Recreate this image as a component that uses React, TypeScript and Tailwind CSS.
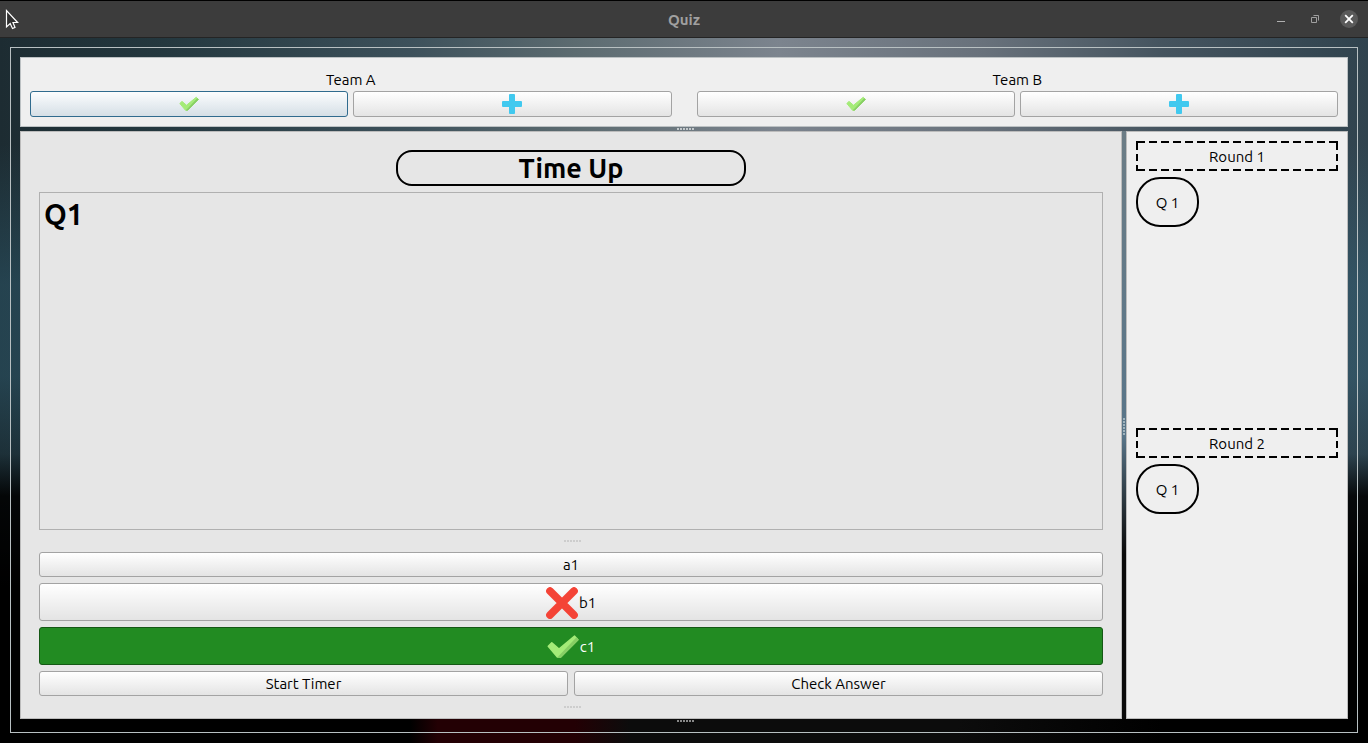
import React from "react";

function Check({ className }: { className: string }) {
  return (
    <svg viewBox="0 0 32 32" className={className} strokeLinejoin="round" aria-hidden="true">
      <path
        d="M1.3 15.2 L4.8 11.8 L12 18 L27.6 5.2 L30.8 8.7 L13.6 26 L10.4 26 Z"
        fill="#a4eb78"
        stroke="#a4eb78"
        strokeWidth="1.6"
      />
      <path d="M12 25.9 L29.6 7.4 L30.8 8.7 L13.6 26 Z" fill="#87ce64" stroke="#87ce64" strokeWidth="1.6" />
    </svg>
  );
}

function Plus({ className }: { className: string }) {
  return (
    <svg viewBox="0 0 20 20" className={className} aria-hidden="true">
      <rect x="7" y="0" width="6" height="20" rx="1" fill="#41c9ef" />
      <rect x="0" y="7" width="20" height="6" rx="1" fill="#41c9ef" />
    </svg>
  );
}

function Cross({ className }: { className: string }) {
  return (
    <svg viewBox="0 0 32 32" className={className} aria-hidden="true">
      <path d="M4 4 L28 28 M28 4 L4 28" stroke="#f44336" strokeWidth="7.6" strokeLinecap="round" />
    </svg>
  );
}

function Grip({ className = "" }: { className?: string }) {
  return (
    <svg viewBox="0 0 22 2" className={`h-0.5 w-[22px] shrink-0 ${className}`} aria-hidden="true">
      {[4, 7, 10, 13, 16, 19].map((x) => (
        <rect key={x} x={x} y="0" width="2" height="2" fill="currentColor" />
      ))}
    </svg>
  );
}

const button =
  "flex items-center justify-center rounded-[3px] border border-[#a3a3a3] bg-linear-to-b from-white to-[#e4e4e4]";

function Team({ name, focused = false }: { name: string; focused?: boolean }) {
  return (
    <section className="flex flex-1 flex-col">
      <h2 className="h-[22px] text-center">{name}</h2>
      <div className="flex gap-[5px]">
        <button
          aria-label={`${name} correct`}
          className={
            focused
              ? "flex h-[26px] flex-1 items-center justify-center rounded-[3px] border border-[#306b8e] bg-linear-to-b from-[#fcfdfe] to-[#d5dfe6]"
              : `${button} h-[26px] flex-1`
          }
        >
          <Check className="size-5" />
        </button>
        <button aria-label={`${name} add point`} className={`${button} h-[26px] flex-1`}>
          <Plus className="size-5" />
        </button>
      </div>
    </section>
  );
}

function Round({ number }: { number: number }) {
  return (
    <section className="flex flex-1 flex-col gap-1.5">
      <h2 className="relative h-[30px] text-center leading-8">
        <svg className="absolute inset-0 size-full" aria-hidden="true">
          <g stroke="#000" strokeWidth="2">
            <path d="M1 1h200M1 29h200" strokeDasharray="8 4" />
            <path d="M1 0v30M201 0v30" strokeDasharray="9 4 7 4" />
          </g>
        </svg>
        Round {number}
      </h2>
      <button className="h-[50px] w-[63px] rounded-[24px] border-2 border-black pt-0.5">Q 1</button>
    </section>
  );
}

export default function App() {
  return (
    <div className="flex min-h-screen flex-col border-t border-black bg-black font-['Ubuntu','Noto_Sans','Open_Sans',sans-serif] text-[15px] leading-[22px] text-black">
      <header className="grid h-[37px] shrink-0 grid-cols-[1fr_auto_1fr] items-center border-b border-[#242424] bg-[#3c3c3c] text-[#a0a0a0]">
        <svg viewBox="0 0 14 22" className="ml-[5px] h-[22px] w-3.5" aria-hidden="true">
          <path
            d="M1.5 2.5V19L5.2 15.6L7.5 20.5L10 19.4L8 14.5H12.6Z"
            fill="#303030"
            stroke="#fff"
            strokeWidth="1.2"
          />
        </svg>
        <h1 className="pt-0.5 font-bold">Quiz</h1>
        <div className="flex items-center justify-end gap-4 pr-2.5">
          <button aria-label="Minimize">
            <svg viewBox="0 0 18 18" className="size-[18px]" aria-hidden="true">
              <path d="M5 11.5h8" stroke="#b0b0b0" />
            </svg>
          </button>
          <button aria-label="Restore">
            <svg viewBox="0 0 18 18" className="size-[18px]" fill="none" stroke="#a0a0a0" aria-hidden="true">
              <path d="M5.5 7.5h5v5h-5zM7.5 5.5h5v5" />
            </svg>
          </button>
          <button aria-label="Close" className="rounded-full bg-[#5a5a5a]">
            <svg viewBox="0 0 18 18" className="size-[18px]" aria-hidden="true">
              <path d="M5.2 5.2l7.6 7.6M12.8 5.2l-7.6 7.6" stroke="#fff" strokeWidth="1.8" />
            </svg>
          </button>
        </div>
      </header>

      <div className="flex flex-1 flex-col bg-[linear-gradient(to_right,transparent_30%,#230004_32%,#230004_42%,#0c0c0c_46%,#0c0c0c_70%,transparent_85%),linear-gradient(to_bottom,transparent_15%,#35708a55_35%,#35708a55_48%,#1c405033_59%,#000d_65%,#000_78%),linear-gradient(to_right,#1d2c32,#24383f_12%,#3d515b_30%,#5c6b70_42%,#7c848e_57%,#68717b_72%,#45545f_85%,#30434e)] bg-[length:100%_24px,100%_100%,100%_100%] bg-bottom bg-no-repeat px-2.5 pt-[9px] pb-2.5">
        <div className="flex flex-1 flex-col border border-[#b8c0c2] px-[9px] pt-[9px]">
          <div className="flex gap-[25px] border border-[#bcc1c3] bg-[#efefef] px-[9px] pt-[11px] pb-[9px]">
            <Team name="Team A" focused />
            <Team name="Team B" />
          </div>
          <div className="flex h-1 items-center justify-center text-[#c3c9cc]">
            <Grip />
          </div>

          <div className="flex flex-1">
            <main className="flex flex-1 flex-col border border-[#bcbcbc] bg-[#e6e6e6] px-[18px] pt-[18px]">
              <div className="h-9 w-[350px] self-center rounded-2xl border-2 border-black text-center text-[27px] leading-8 font-bold">
                Time Up
              </div>
              <div className="mt-1.5 flex-1 border border-[#b0b0b0] px-1 pt-1 text-[29px] leading-[34px] font-bold">
                Q1
              </div>
              <div className="flex h-[22px] items-center justify-center text-[#cdcdcd]">
                <Grip />
              </div>
              <div className="flex flex-col gap-1.5">
                <button className={`${button} h-[25px] pt-px`}>a1</button>
                <button className={`${button} h-[38px] gap-px pt-px`}>
                  <Cross className="size-8" />
                  b1
                </button>
                <button className="flex h-[38px] items-center justify-center gap-px rounded-[3px] border border-[#155815] bg-[#228b22] pt-px text-white">
                  <Check className="size-8" />
                  c1
                </button>
                <div className="flex gap-1.5">
                  <button className={`${button} h-[25px] flex-1 pt-px`}>Start Timer</button>
                  <button className={`${button} h-[25px] flex-1 pt-px`}>Check Answer</button>
                </div>
              </div>
              <div className="flex h-[22px] items-center justify-center text-[#cdcdcd]">
                <Grip />
              </div>
            </main>
            <div className="flex w-1 items-center justify-center bg-linear-to-b from-[#6c7d86] via-[#587589] via-[52%] to-[#0a0a0a] to-[72%] text-[#9fb3bd]">
              <Grip className="rotate-90" />
            </div>
            <aside className="flex w-[222px] flex-col gap-1.5 border border-[#bcbcbc] bg-[#efefef] p-[9px]">
              <Round number={1} />
              <Round number={2} />
            </aside>
          </div>
          <div className="flex h-[13px] justify-center pt-px text-[#888]">
            <Grip />
          </div>
        </div>
      </div>
    </div>
  );
}
